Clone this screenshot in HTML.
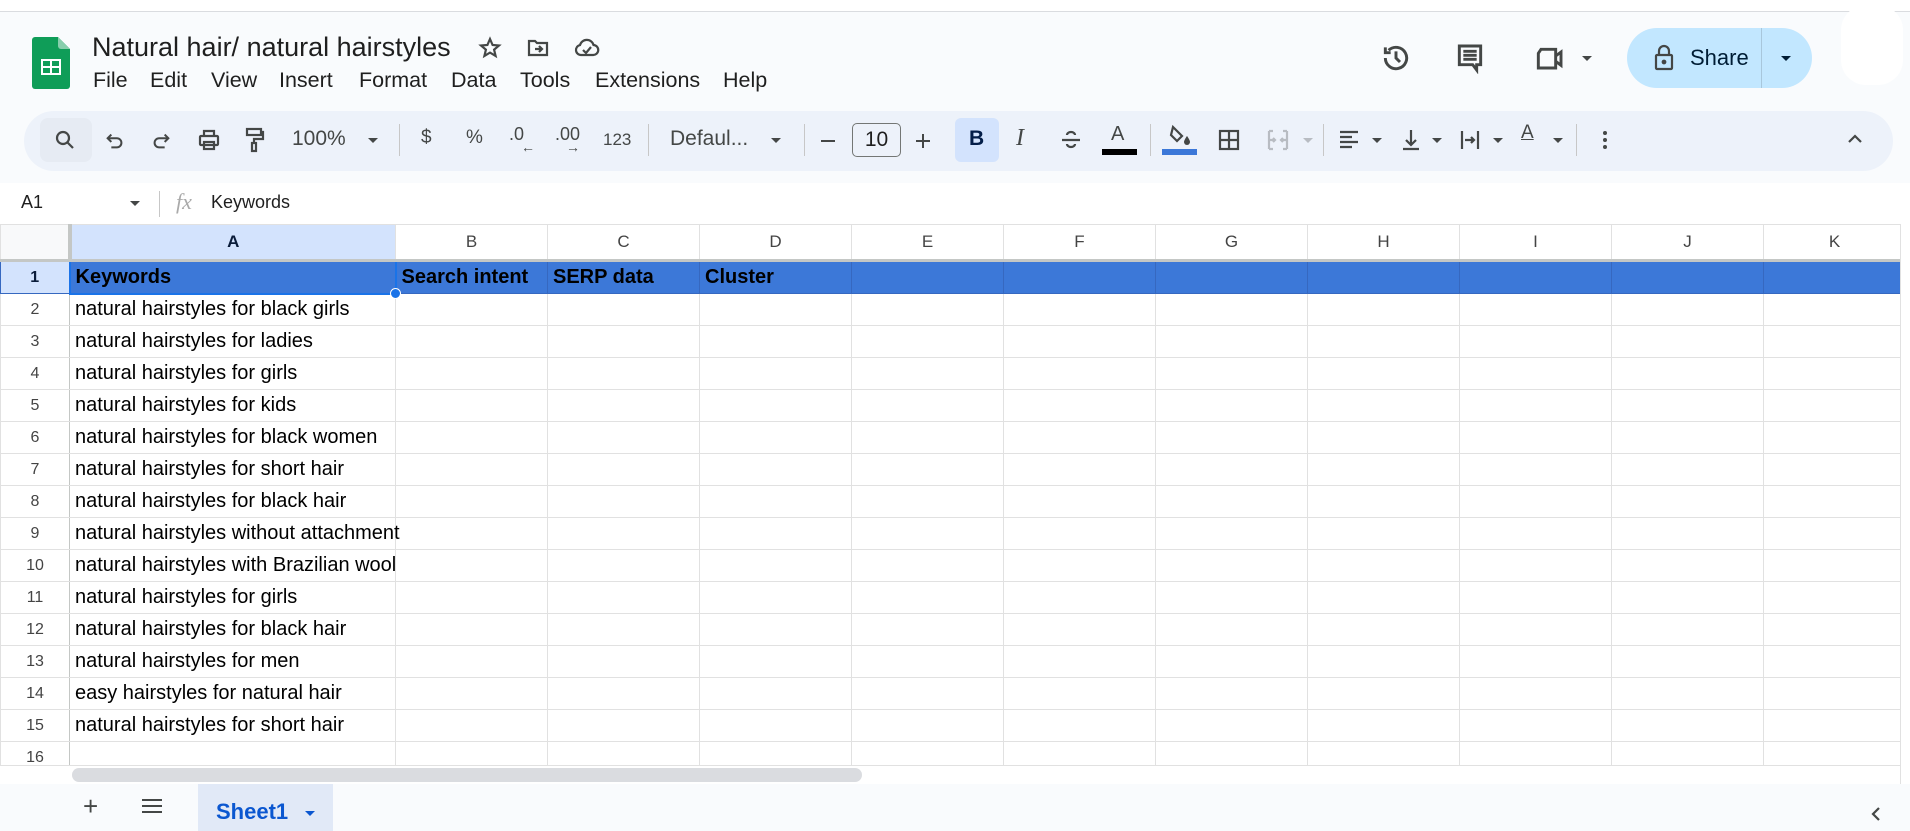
<!DOCTYPE html>
<html><head><meta charset="utf-8"><style>
*{margin:0;padding:0;box-sizing:border-box}
body{width:1910px;height:831px;overflow:hidden;background:#f9fbfd;font-family:"Liberation Sans",Arial,sans-serif;position:relative;color:#1f1f1f}
.a{position:absolute}
.ic{position:absolute;fill:none;stroke:#444746;stroke-width:2.2}
.menu span{position:absolute;top:68px;font-size:21.5px;color:#1f1f1f}
.tb{position:absolute;font-size:21px;color:#444746;top:127px}
.sep{position:absolute;top:124px;width:1px;height:32px;background:#c7c7c7}
.dd{position:absolute;width:0;height:0;border-left:5px solid transparent;border-right:5px solid transparent;border-top:5px solid #444746}
table{position:absolute;left:0;top:224px;width:1905px;border-collapse:collapse;table-layout:fixed;background:#fff}
td{border:1px solid #e1e1e1;font-size:20px;padding:0 0 0 5px;white-space:nowrap;overflow:visible;color:#000;max-width:0}
td.r{text-align:center;font-size:16px;color:#444;padding:0;border-right:1px solid #c4c7c5;background:#fff}
tr.h td{text-align:center;font-size:17px;color:#444;border-bottom:3px solid #c4c7c5;height:36px;padding:0}
tr.b td{background:#3c78d8;font-weight:bold;border-color:#3668c0}
</style></head><body>
<div class="a" style="left:0;top:0;width:1910px;height:12px;background:#fff;border-bottom:1px solid #dadce0"></div>
<svg class="a" style="left:32px;top:37px" width="38" height="52" viewBox="0 0 38 52"><path d="M3 0h23l12 12v37a3 3 0 0 1-3 3H3a3 3 0 0 1-3-3V3a3 3 0 0 1 3-3z" fill="#0f9d58"/><path d="M26 0l12 12H29a3 3 0 0 1-3-3z" fill="#87ceac"/><rect x="9" y="22" width="20" height="16" fill="#fff"/><rect x="11" y="24" width="7" height="5" fill="#0f9d58"/><rect x="20" y="24" width="7" height="5" fill="#0f9d58"/><rect x="11" y="31" width="7" height="5" fill="#0f9d58"/><rect x="20" y="31" width="7" height="5" fill="#0f9d58"/></svg>
<div class="a" style="left:92px;top:32px;font-size:27px;color:#1f1f1f">Natural hair/ natural hairstyles</div>
<svg class="ic" style="left:478px;top:36px" width="24" height="24" viewBox="0 0 24 24"><path d="M12 3l2.6 6 6.4.5-4.9 4.2 1.5 6.3L12 16.6 6.4 20l1.5-6.3L3 9.5 9.4 9z"/></svg>
<svg class="ic" style="left:526px;top:36px" width="24" height="24" viewBox="0 0 24 24"><path d="M3 5h6l2 2h10v12H3z"/><path d="M9 13h7m-3-3l3 3-3 3"/></svg>
<svg class="ic" style="left:574px;top:36px" width="26" height="24" viewBox="0 0 26 24"><path d="M7 19a5 5 0 0 1-1-9.9A7 7 0 0 1 19.5 9 4.5 4.5 0 0 1 19 19z"/><path d="M9 14l3 3 5-6"/></svg>
<div class="menu"><span style="left:93px">File</span><span style="left:150px">Edit</span><span style="left:211px">View</span><span style="left:279px">Insert</span><span style="left:359px">Format</span><span style="left:451px">Data</span><span style="left:520px">Tools</span><span style="left:595px">Extensions</span><span style="left:723px">Help</span></div>
<svg class="ic" style="left:1380px;top:42px" width="32" height="32" viewBox="0 0 24 24" stroke-width="2.4"><path d="M4 12a8 8 0 1 0 2.5-5.8"/><path d="M4 4v4h4"/><path d="M12 7v5l3 3"/></svg>
<svg class="ic" style="left:1454px;top:42px" width="32" height="32" viewBox="0 0 24 24" stroke-width="2.4"><path d="M4 3h16v14h-3v4l-3-4H4z"/><path d="M7 7h10M7 10h10M7 13h10"/></svg>
<svg class="ic" style="left:1533px;top:44px" width="32" height="28" viewBox="0 0 24 21" stroke-width="2.4"><path d="M6 4h11v14H4V7z"/><path d="M17 9l4-3v10l-4-3"/></svg>
<div class="dd" style="left:1582px;top:56px"></div>
<div class="a" style="left:1627px;top:28px;width:185px;height:60px;border-radius:30px;background:#c2e7ff"></div>
<div class="a" style="left:1761px;top:28px;width:1px;height:60px;background:#a8c7dc"></div>
<svg class="ic" style="left:1653px;top:44px" width="22" height="28" viewBox="0 0 22 28" stroke="#001d35"><rect x="3" y="11" width="16" height="14" rx="1"/><path d="M6 11V7a5 5 0 0 1 10 0v4"/><circle cx="11" cy="18" r="1.3" fill="#001d35"/></svg>
<div class="a" style="left:1690px;top:45px;font-size:22px;color:#001d35">Share</div>
<div class="dd" style="left:1781px;top:56px;border-top-color:#001d35"></div>
<div class="a" style="left:1841px;top:5px;width:62px;height:80px;background:#fff;border-radius:25px"></div>
<div class="a" style="left:24px;top:111px;width:1869px;height:60px;border-radius:30px;background:#edf2fa"></div>
<div class="a" style="left:40px;top:118px;width:52px;height:44px;border-radius:8px;background:#e6ebf3"></div>
<svg class="ic" style="left:53px;top:128px" width="24" height="24" viewBox="0 0 24 24"><circle cx="10" cy="10" r="6"/><path d="M14.5 14.5L20 20"/></svg>
<svg class="ic" style="left:104px;top:130px" width="22" height="22" viewBox="0 0 24 24"><path d="M8 5L4 9l4 4"/><path d="M4 9h10a5 5 0 0 1 0 10H8"/></svg>
<svg class="ic" style="left:150px;top:130px" width="22" height="22" viewBox="0 0 24 24"><path d="M16 5l4 4-4 4"/><path d="M20 9H10a5 5 0 0 0 0 10h6"/></svg>
<svg class="ic" style="left:197px;top:128px" width="24" height="24" viewBox="0 0 24 24"><path d="M7 8V3h10v5"/><rect x="3" y="8" width="18" height="9" rx="1"/><rect x="7" y="14" width="10" height="7"/></svg>
<svg class="ic" style="left:243px;top:127px" width="22" height="26" viewBox="0 0 22 26"><rect x="4" y="2" width="14" height="6"/><path d="M18 5h2v7h-9v4"/><rect x="9" y="16" width="4" height="8"/></svg>
<div class="tb" style="left:292px">100%</div><div class="dd" style="left:368px;top:138px"></div>
<div class="sep" style="left:399px"></div>
<div class="tb" style="left:421px;font-size:19px">$</div>
<div class="tb" style="left:466px;font-size:19px">%</div>
<div class="tb" style="left:509px;font-size:18px;top:124px">.0</div><div class="tb" style="left:521px;font-size:14px;top:139px">←</div>
<div class="tb" style="left:555px;font-size:18px;top:124px">.00</div><div class="tb" style="left:566px;font-size:14px;top:139px">→</div>
<div class="tb" style="left:603px;font-size:17px;top:130px">123</div>
<div class="sep" style="left:648px"></div>
<div class="tb" style="left:670px">Defaul...</div><div class="dd" style="left:771px;top:138px"></div>
<div class="sep" style="left:804px"></div>
<div class="a" style="left:821px;top:140px;width:14px;height:2px;background:#444746"></div>
<div class="a" style="left:852px;top:123px;width:49px;height:34px;border:1px solid #747775;border-radius:5px;font-size:21px;text-align:center;line-height:32px;color:#1f1f1f">10</div>
<div class="a" style="left:916px;top:140px;width:14px;height:2px;background:#444746"></div><div class="a" style="left:922px;top:134px;width:2px;height:14px;background:#444746"></div>
<div class="a" style="left:955px;top:118px;width:44px;height:44px;border-radius:6px;background:#d3e3fd"></div>
<div class="tb" style="left:969px;font-weight:bold;color:#041e49">B</div>
<div class="tb" style="left:1016px;font-style:italic;font-family:'Liberation Serif',serif;font-size:24px;top:125px">I</div>
<svg class="ic" style="left:1060px;top:128px" width="22" height="24" viewBox="0 0 22 24"><path d="M2 12h18"/><path d="M15 7a4 3 0 0 0-8 0M7 16a4 3 0 0 0 8 0"/></svg>
<div class="tb" style="left:1111px;top:123px;font-size:20px">A</div><div class="a" style="left:1102px;top:149px;width:35px;height:6px;background:#000"></div>
<div class="sep" style="left:1150px"></div>
<svg class="a" style="left:1168px;top:124px" width="24" height="24" viewBox="0 0 24 24"><path d="M5 3l9 9-5 5-6-6z" fill="none" stroke="#444746" stroke-width="2.2"/><path d="M19 12s3 4 3 6a3 3 0 0 1-6 0c0-2 3-6 3-6z" fill="#444746"/></svg>
<div class="a" style="left:1162px;top:149px;width:35px;height:6px;background:#3c78d8"></div>
<svg class="ic" style="left:1218px;top:129px" width="22" height="22" viewBox="0 0 22 22"><rect x="2" y="2" width="18" height="18"/><path d="M11 2v18M2 11h18"/></svg>
<svg class="ic" style="left:1267px;top:129px;stroke:#b8bcc2" width="22" height="22" viewBox="0 0 22 22"><path d="M2 2h4M2 20h4M16 2h4M16 20h4M2 2v18M20 2v18M2 11h6m-2-2l2 2-2 2M20 11h-6m2-2l-2 2 2 2"/></svg>
<div class="dd" style="left:1303px;top:138px;border-top-color:#b8bcc2"></div>
<div class="sep" style="left:1323px"></div>
<svg class="ic" style="left:1338px;top:129px" width="22" height="22" viewBox="0 0 22 22"><path d="M2 3h18M2 8h12M2 13h18M2 18h12"/></svg><div class="dd" style="left:1372px;top:138px"></div>
<svg class="ic" style="left:1400px;top:127px" width="22" height="26" viewBox="0 0 22 26"><path d="M11 3v15m-5-5l5 5 5-5M3 22h16"/></svg><div class="dd" style="left:1432px;top:138px"></div>
<svg class="ic" style="left:1459px;top:128px" width="22" height="24" viewBox="0 0 22 24"><path d="M3 3v18M19 3v18M6 12h9m-3-3l3 3-3 3"/></svg><div class="dd" style="left:1493px;top:138px"></div>
<div class="tb" style="left:1521px;top:122px;font-size:19px;text-decoration:underline">A</div><div class="dd" style="left:1553px;top:138px"></div>
<div class="sep" style="left:1576px"></div>
<div class="a" style="left:1603px;top:131px;width:4px;height:4px;border-radius:2px;background:#444746;box-shadow:0 7px 0 #444746,0 14px 0 #444746"></div>
<svg class="ic" style="left:1846px;top:133px" width="18" height="12" viewBox="0 0 18 12"><path d="M3 9l6-6 6 6"/></svg>
<div class="a" style="left:0;top:183px;width:1910px;height:41px;background:#fff"></div>
<div class="a" style="left:21px;top:192px;font-size:18px;color:#1f1f1f">A1</div>
<div class="dd" style="left:130px;top:201px"></div>
<div class="a" style="left:159px;top:191px;width:1px;height:26px;background:#c7c7c7"></div>
<div class="a" style="left:176px;top:189px;font-size:22px;font-style:italic;font-family:'Liberation Serif',serif;color:#aaa">fx</div>
<div class="a" style="left:211px;top:192px;font-size:18px;color:#1f1f1f">Keywords</div>
<table>
<colgroup><col style="width:69px"><col style="width:326px"><col style="width:152px"><col style="width:152px"><col style="width:152px"><col style="width:152px"><col style="width:152px"><col style="width:152px"><col style="width:152px"><col style="width:152px"><col style="width:152px"><col style="width:142px"></colgroup>
<tr class="h"><td class="r" style="background:#f8f9fa;border-right:4px solid #c4c7c5"></td><td style="background:#d3e3fd;color:#0b1d3a;font-weight:bold">A</td><td>B</td><td>C</td><td>D</td><td>E</td><td>F</td><td>G</td><td>H</td><td>I</td><td>J</td><td>K</td></tr>
<tr class="b" style="height:33px"><td class="r" style="background:#d3e3fd;color:#0b1d3a;font-weight:bold">1</td><td style="border:2px solid #1a73e8">Keywords</td><td>Search intent</td><td>SERP data</td><td>Cluster</td><td></td><td></td><td></td><td></td><td></td><td></td><td></td></tr>
<tr style="height:32px"><td class="r">2</td><td>natural hairstyles for black girls</td><td></td><td></td><td></td><td></td><td></td><td></td><td></td><td></td><td></td><td></td></tr>
<tr style="height:32px"><td class="r">3</td><td>natural hairstyles for ladies</td><td></td><td></td><td></td><td></td><td></td><td></td><td></td><td></td><td></td><td></td></tr>
<tr style="height:32px"><td class="r">4</td><td>natural hairstyles for girls</td><td></td><td></td><td></td><td></td><td></td><td></td><td></td><td></td><td></td><td></td></tr>
<tr style="height:32px"><td class="r">5</td><td>natural hairstyles for kids</td><td></td><td></td><td></td><td></td><td></td><td></td><td></td><td></td><td></td><td></td></tr>
<tr style="height:32px"><td class="r">6</td><td>natural hairstyles for black women</td><td></td><td></td><td></td><td></td><td></td><td></td><td></td><td></td><td></td><td></td></tr>
<tr style="height:32px"><td class="r">7</td><td>natural hairstyles for short hair</td><td></td><td></td><td></td><td></td><td></td><td></td><td></td><td></td><td></td><td></td></tr>
<tr style="height:32px"><td class="r">8</td><td>natural hairstyles for black hair</td><td></td><td></td><td></td><td></td><td></td><td></td><td></td><td></td><td></td><td></td></tr>
<tr style="height:32px"><td class="r">9</td><td>natural hairstyles without attachment</td><td></td><td></td><td></td><td></td><td></td><td></td><td></td><td></td><td></td><td></td></tr>
<tr style="height:32px"><td class="r">10</td><td>natural hairstyles with Brazilian wool</td><td></td><td></td><td></td><td></td><td></td><td></td><td></td><td></td><td></td><td></td></tr>
<tr style="height:32px"><td class="r">11</td><td>natural hairstyles for girls</td><td></td><td></td><td></td><td></td><td></td><td></td><td></td><td></td><td></td><td></td></tr>
<tr style="height:32px"><td class="r">12</td><td>natural hairstyles for black hair</td><td></td><td></td><td></td><td></td><td></td><td></td><td></td><td></td><td></td><td></td></tr>
<tr style="height:32px"><td class="r">13</td><td>natural hairstyles for men</td><td></td><td></td><td></td><td></td><td></td><td></td><td></td><td></td><td></td><td></td></tr>
<tr style="height:32px"><td class="r">14</td><td>easy hairstyles for natural hair</td><td></td><td></td><td></td><td></td><td></td><td></td><td></td><td></td><td></td><td></td></tr>
<tr style="height:32px"><td class="r">15</td><td>natural hairstyles for short hair</td><td></td><td></td><td></td><td></td><td></td><td></td><td></td><td></td><td></td><td></td></tr>
<tr style="height:32px"><td class="r">16</td><td></td><td></td><td></td><td></td><td></td><td></td><td></td><td></td><td></td><td></td><td></td></tr>
</table>
<div class="a" style="left:390px;top:288px;width:11px;height:11px;border-radius:6px;background:#1a73e8;border:1px solid #fff"></div>
<div class="a" style="left:0;top:765px;width:1910px;height:19px;background:#fff;border-top:1px solid #e1e1e1"></div>
<div class="a" style="left:72px;top:768px;width:790px;height:14px;border-radius:7px;background:#dadce0"></div>
<div class="a" style="left:1900px;top:224px;width:10px;height:560px;background:#fff;border-left:1px solid #e1e1e1"></div>
<div class="a" style="left:0;top:784px;width:1910px;height:47px;background:#f9fbfd"></div>
<div class="a" style="left:83px;top:791px;font-size:26px;color:#444746">+</div>
<div class="a" style="left:142px;top:799px;width:20px;height:2px;background:#444746;box-shadow:0 6px 0 #444746,0 12px 0 #444746"></div>
<div class="a" style="left:198px;top:784px;width:135px;height:47px;background:#e1e9f7"></div>
<div class="a" style="left:216px;top:799px;font-size:22px;font-weight:bold;color:#0b57d0">Sheet1</div>
<div class="dd" style="left:305px;top:811px;border-top-color:#0b57d0"></div>
<svg class="ic" style="left:1870px;top:805px" width="12" height="18" viewBox="0 0 12 18"><path d="M9 3L3 9l6 6"/></svg>
</body></html>
